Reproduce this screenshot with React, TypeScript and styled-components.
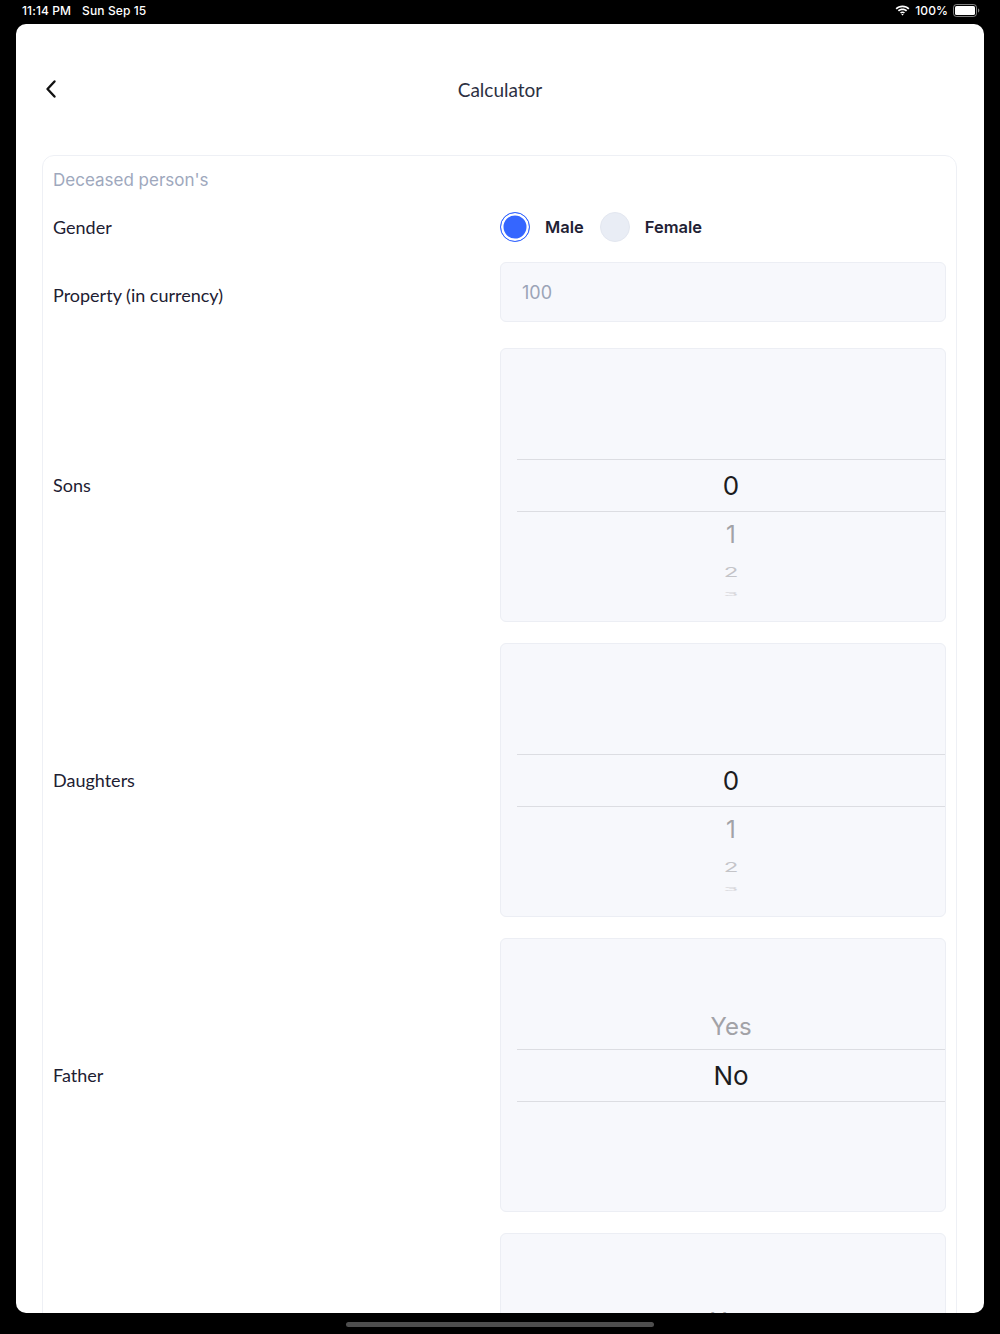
import React from 'react';
import styled, { createGlobalStyle } from 'styled-components';

interface WheelRow {
  label: string;
  options: Array<string>;
  selected: number;
}

const rows: Array<WheelRow> = [
  { label: 'Sons', options: ['0', '1', '2', '3', '4', '5'], selected: 0 },
  { label: 'Daughters', options: ['0', '1', '2', '3', '4', '5'], selected: 0 },
  { label: 'Father', options: ['Yes', 'No'], selected: 1 },
  { label: 'Mother', options: ['Yes', 'No'], selected: 1 },
];

// slot heights from the top of the wheel down to the bottom, selected in the middle
const slotOffsets = [-3, -2, -1, 0, 1, 2, 3];

const Wheel = ({ options, selected }: { options: Array<string>; selected: number }) => (
  <WheelBox>
    {slotOffsets.map((offset) => {
      const value = options[selected + offset];
      const dist = Math.abs(offset);
      return (
        <Slot key={offset} $dist={dist}>
          {value !== undefined && <SlotText $dist={dist}>{value}</SlotText>}
        </Slot>
      );
    })}
  </WheelBox>
);

const WifiIcon = () => (
  <svg width="15" height="11" viewBox="0 0 15 11">
    <path d="M7.5 2.2c2.2 0 4.2.8 5.7 2.2l1.2-1.2C12.6 1.5 10.2.6 7.5.6S2.4 1.5.6 3.2l1.2 1.2C3.3 3 5.3 2.2 7.5 2.2z" fill="#fff" />
    <path d="M7.5 5.2c1.3 0 2.5.5 3.5 1.3l1.2-1.2C10.9 4.2 9.3 3.6 7.5 3.6S4.1 4.2 2.8 5.3L4 6.5c1-.8 2.2-1.3 3.5-1.3z" fill="#fff" />
    <path d="M7.5 8.1c.5 0 .9.2 1.3.5l1.2-1.2c-.7-.6-1.5-.9-2.5-.9s-1.8.3-2.5.9l1.2 1.2c.4-.3.8-.5 1.300-.5z" fill="#fff" />
    <path d="M7.5 10.6l1.1-1.1c-.3-.3-.7-.4-1.1-.4s-.8.1-1.1.4z" fill="#fff" />
  </svg>
);

const BatteryIcon = () => (
  <svg width="27" height="13" viewBox="0 0 27 13">
    <rect x="0.5" y="0.5" width="23" height="12" rx="3" fill="none" stroke="#fff" strokeOpacity="0.5" />
    <rect x="2" y="2" width="20" height="9" rx="1.6" fill="#fff" />
    <path d="M25 4.5v4c.8-.3 1.3-1.1 1.3-2s-.5-1.7-1.3-2z" fill="#fff" fillOpacity="0.5" />
  </svg>
);

const BackIcon = () => (
  <svg width="12" height="20" viewBox="0 0 12 20">
    <polyline points="9.5,2.5 2.5,10 9.5,17.5" fill="none" stroke="#111" strokeWidth="2.4" strokeLinecap="round" strokeLinejoin="round" />
  </svg>
);

export default function App() {
  return (
    <Screen>
      <GlobalStyle />
      <StatusBar>
        <StatusText>
          11:14 PM<StatusGap />Sun Sep 15
        </StatusText>
        <StatusRight>
          <WifiIcon />
          <StatusText>100%</StatusText>
          <BatteryIcon />
        </StatusRight>
      </StatusBar>
      <Sheet>
        <Header>
          <BackButton>
            <BackIcon />
          </BackButton>
          <Title>Calculator</Title>
        </Header>
        <Card>
          <CardTitle>Deceased person's</CardTitle>
          <Row $top={20}>
            <Label>Gender</Label>
            <RadioGroup>
              <Radio $checked />
              <RadioLabel>Male</RadioLabel>
              <Radio />
              <RadioLabel>Female</RadioLabel>
            </RadioGroup>
          </Row>
          <Row $top={20}>
            <Label $nudge={6}>Property (in currency)</Label>
            <Input placeholder="100" />
          </Row>
          {rows.map((row, index) => (
            <Row key={row.label} $top={index === 0 ? 26 : 21}>
              <Label>{row.label}</Label>
              <Wheel options={row.options} selected={row.selected} />
            </Row>
          ))}
        </Card>
      </Sheet>
      <HomeBar>
        <HomeIndicator />
      </HomeBar>
    </Screen>
  );
}

const GlobalStyle = createGlobalStyle`
  html, body {
    margin: 0;
    padding: 0;
    background: #000;
  }
  * {
    box-sizing: border-box;
  }
`;

const Screen = styled.div`
  width: 1000px;
  height: 1334px;
  background: #000;
  display: flex;
  flex-direction: column;
  overflow: hidden;
  font-family: Inter, 'Noto Sans', sans-serif;
`;

const StatusBar = styled.div`
  height: 24px;
  flex: none;
  display: flex;
  align-items: center;
  justify-content: space-between;
  padding: 0 20px 4px 22px;
`;

const StatusText = styled.span`
  color: #fff;
  font-size: 12px;
  font-weight: 500;
  letter-spacing: 0.1px;
`;

const StatusGap = styled.span`
  display: inline-block;
  width: 11px;
`;

const StatusRight = styled.div`
  display: flex;
  align-items: center;
  gap: 5px;
`;

const Sheet = styled.div`
  flex: 1;
  margin: 0 16px;
  background: #fff;
  border-radius: 10px;
  overflow: hidden;
  display: flex;
  flex-direction: column;
`;

const Header = styled.div`
  height: 131px;
  flex: none;
  position: relative;
  display: flex;
  align-items: center;
  justify-content: center;
  padding-bottom: 1px;
`;

const BackButton = styled.div`
  position: absolute;
  left: 29px;
  top: 55px;
  display: flex;
`;

const Title = styled.div`
  font-family: Lato, 'Noto Sans', sans-serif;
  font-size: 19px;
  color: #2c3042;
`;

const Card = styled.div`
  margin: 0 27px 0 26px;
  border: 1px solid #eef0f5;
  border-radius: 12px;
  padding: 12px 10px 40px 10px;
  flex: none;
`;

const CardTitle = styled.div`
  font-size: 17px;
  line-height: 24px;
  color: #9ea8bd;
`;

const Row = styled.div<{ $top: number }>`
  margin-top: ${({ $top }) => $top}px;
  display: grid;
  grid-template-columns: 447px 1fr;
  align-items: center;
`;

const Label = styled.div<{ $nudge?: number }>`
  font-family: Lato, 'Noto Sans', sans-serif;
  font-size: 18px;
  color: #1d2032;
  padding-top: ${({ $nudge }) => $nudge || 0}px;
`;

const RadioGroup = styled.div`
  display: flex;
  align-items: center;
  height: 30px;
`;

const Radio = styled.span<{ $checked?: boolean }>`
  width: 30px;
  height: 30px;
  border-radius: 50%;
  flex: none;
  background: ${({ $checked }) => ($checked ? '#3566ff' : '#e9edf5')};
  border: ${({ $checked }) => ($checked ? '1.5px solid #3566ff' : '1px solid #e3e7f0')};
  box-shadow: ${({ $checked }) => ($checked ? 'inset 0 0 0 2.5px #fff' : 'none')};
`;

const RadioLabel = styled.span`
  font-size: 16.5px;
  font-weight: 600;
  color: #1f2235;
  margin: 0 16px 0 15px;
`;

const Input = styled.input`
  height: 60px;
  width: 100%;
  border: 1px solid #eceef4;
  border-radius: 6px;
  background: #f7f8fc;
  padding: 0 21px;
  font-family: Inter, 'Noto Sans', sans-serif;
  font-size: 18px;
  color: #1d2032;
  outline: none;
  &::placeholder {
    color: #9ba4b7;
  }
`;

const WheelBox = styled.div`
  height: 274px;
  border: 1px solid #eceef4;
  border-radius: 6px;
  background: #f7f8fc;
  display: flex;
  flex-direction: column;
  justify-content: center;
`;

const slotHeights = [53, 45, 31, 11];
const slotScale = [1, 1, 0.55, 0.22];
const slotColors = ['#1c1c1e', '#a2a2a7', '#c4c4c8', '#d6d6da'];

const Slot = styled.div<{ $dist: number }>`
  height: ${({ $dist }) => slotHeights[$dist]}px;
  margin-left: 16px;
  flex: none;
  display: flex;
  align-items: center;
  justify-content: center;
  padding-top: 2px;
  overflow: visible;
  border-top: ${({ $dist }) => ($dist === 0 ? '1px solid #dcdde2' : 'none')};
  border-bottom: ${({ $dist }) => ($dist === 0 ? '1px solid #dcdde2' : 'none')};
`;

const SlotText = styled.span<{ $dist: number }>`
  font-family: Inter, 'Noto Sans', sans-serif;
  font-size: ${({ $dist }) => ($dist === 0 ? 26 : 24)}px;
  line-height: 1;
  color: ${({ $dist }) => slotColors[$dist]};
  transform: scaleY(${({ $dist }) => slotScale[$dist]});
`;

const HomeBar = styled.div`
  height: 21px;
  flex: none;
  display: flex;
  align-items: center;
  justify-content: center;
  padding-top: 1px;
`;

const HomeIndicator = styled.div`
  width: 308px;
  height: 5px;
  border-radius: 3px;
  background: #4e4e4e;
`;
